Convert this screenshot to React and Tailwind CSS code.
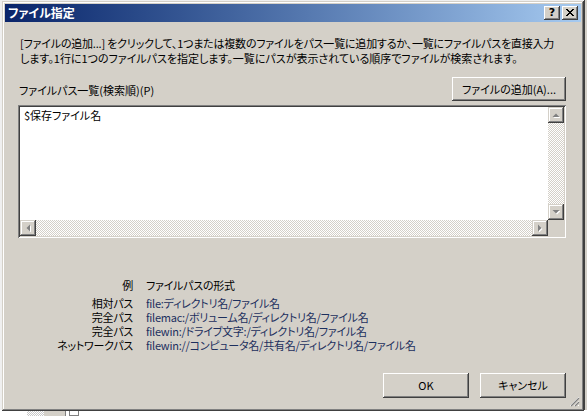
import React from "react";

const raised =
  "shadow-[inset_-1px_-1px_#404040,inset_1px_1px_#ffffff,inset_-2px_-2px_#808080,inset_2px_2px_#d4d0c8]";

function Arrow({ dir }) {
  const pts = {
    up: "0.5,6 4,2.5 7.5,6",
    down: "0.5,2 4,5.5 7.5,2",
    left: "6,0.5 2.5,4 6,7.5",
    right: "2,0.5 5.5,4 2,7.5",
  }[dir];
  return (
    <svg width="8" height="8" viewBox="0 0 8 8">
      <polygon points={pts} fill="#ffffff" transform="translate(1,1)" />
      <polygon points={pts} fill="#808080" />
    </svg>
  );
}

function ScrollBtn({ dir }) {
  return (
    <div className="w-[16px] h-[16px] shrink-0 bg-[#d4d0c8] flex items-center justify-center shadow-[inset_-1px_-1px_#404040,inset_1px_1px_#d4d0c8,inset_-2px_-2px_#808080,inset_2px_2px_#ffffff]">
      <Arrow dir={dir} />
    </div>
  );
}

const track =
  "bg-[repeating-conic-gradient(#ffffff_0_25%,#d4d0c8_0_50%)] bg-[length:2px_2px]";

export default function App() {
  return (
    <div className="relative w-[587px] h-[416px] overflow-hidden bg-[#efefef] font-['Noto_Sans_CJK_JP','Noto_Sans',sans-serif] [font-feature-settings:'palt'] text-black">
      {/* desktop fragments behind the dialog */}
      <div className="absolute right-0 top-0 w-[3px] h-full bg-[#d4d0c8] border-l border-[#404040]" />
      <div className="absolute left-0 bottom-0 w-full h-[6px] bg-white flex">
        <div className="ml-[27px] w-[17px] h-full bg-[repeating-conic-gradient(#ffffff_0_25%,#c8c8c8_0_50%)] bg-[length:2px_2px]" />
        <div className="w-[22px] h-full bg-[#d4d0c8] border-r border-[#808080]" />
        <div className="ml-[3px] w-[10px] h-full border border-[#808080] bg-white" />
      </div>

      {/* dialog window */}
      <div className="absolute left-[2px] top-[1px] w-[582px] h-[410px] bg-[#d4d0c8] p-[3px] flex flex-col shadow-[inset_-1px_-1px_#404040,inset_1px_1px_#d4d0c8,inset_-2px_-2px_#808080,inset_2px_2px_#ffffff]">
        {/* title bar */}
        <div className="h-[18px] shrink-0 flex items-center pl-[3px] pr-[3px] bg-gradient-to-r from-[#0a246a] to-[#a6caf0]">
          <span className="text-white font-bold text-[12px] leading-[18px]">
            ファイル指定
          </span>
          <div className="ml-auto flex items-center">
            <div className={`w-[16px] h-[14px] bg-[#d4d0c8] ${raised} flex items-center justify-center`}>
              <span className="font-['DejaVu_Sans',sans-serif] font-bold text-[11px] leading-[11px] [font-feature-settings:normal] -mt-[1px]">
                ?
              </span>
            </div>
            <div className={`ml-[2px] w-[16px] h-[14px] bg-[#d4d0c8] ${raised} flex items-center justify-center`}>
              <svg width="8" height="7" viewBox="0 0 8 7" className="-mt-[1px]">
                <path d="M0 0h2v1h1v1h2V1h1V0h2v1H7v1H6v1H5v1h1v1h1v1h1v1H6V6H5V5H3v1H2v1H0V6h1V5h1V4h1V3H2V2H1V1H0z" fill="#000" />
              </svg>
            </div>
          </div>
        </div>

        {/* content */}
        <div className="relative flex-1 flex flex-col pl-[13px] pr-[15px] pt-[14px] text-[11px] leading-[15px]">
          <p className="pl-[2px] whitespace-nowrap">
            <span className="tracking-[-0.2px]">
              [ファイルの追加...] をクリックして、1つまたは複数のファイルをパス一覧に追加するか、一覧にファイルパスを直接入力
            </span>
            <br />
            します。1行に1つのファイルパスを指定します。一覧にパスが表示されている順序でファイルが検索されます。
          </p>

          <div className="mt-[11px] flex items-end justify-between">
            <span className="pl-[1px] mb-[3px]">ファイルパス一覧(検索順)(P)</span>
            <button className={`w-[114px] h-[24px] bg-[#d4d0c8] ${raised} text-[11px] leading-[15px]`}>
              ファイルの追加(A)...
            </button>
          </div>

          {/* list box */}
          <div className="mt-[4px] h-[133px] bg-white p-[2px] grid grid-cols-[1fr_16px] grid-rows-[1fr_16px] shadow-[inset_1px_1px_#808080,inset_-1px_-1px_#ffffff,inset_2px_2px_#404040,inset_-2px_-2px_#d4d0c8]">
            <div className="pl-[4px] pt-[1px]">$保存ファイル名</div>
            <div className="flex flex-col">
              <ScrollBtn dir="up" />
              <div className={`flex-1 ${track}`} />
              <ScrollBtn dir="down" />
            </div>
            <div className="flex">
              <ScrollBtn dir="left" />
              <div className={`flex-1 ${track}`} />
              <ScrollBtn dir="right" />
            </div>
            <div className="bg-[#d4d0c8]" />
          </div>

          {/* examples */}
          <div className="mt-[40px] grid grid-cols-[115px_1fr] gap-x-[13px] leading-[14px] whitespace-nowrap tracking-[-0.25px]">
            <div className="text-right mb-[4px]">例</div>
            <div className="mb-[4px]">ファイルパスの形式</div>
            <div className="text-right">相対パス</div>
            <div className="text-[#1c2f5e]">file:ディレクトリ名/ファイル名</div>
            <div className="text-right">完全パス</div>
            <div className="text-[#1c2f5e]">filemac:/ボリューム名/ディレクトリ名/ファイル名</div>
            <div className="text-right">完全パス</div>
            <div className="text-[#1c2f5e]">filewin:/ドライブ文字:/ディレクトリ名/ファイル名</div>
            <div className="text-right">ネットワークパス</div>
            <div className="text-[#1c2f5e]">filewin://コンピュータ名/共有名/ディレクトリ名/ファイル名</div>
          </div>

          <div className="mt-[21px] flex justify-end gap-[11px]">
            <button className={`w-[86px] h-[25px] bg-[#d4d0c8] ${raised} text-[11px]`}>OK</button>
            <button className={`w-[86px] h-[25px] bg-[#d4d0c8] ${raised} text-[11px]`}>キャンセル</button>
          </div>

          {/* size grip */}
          <svg className="absolute right-[1px] bottom-[1px]" width="11" height="11" viewBox="0 0 11 11">
            <path d="M10 1L1 10M10 5L5 10M10 9L9 10" stroke="#ffffff" strokeWidth="1" />
            <path d="M10 2L2 10M10 6L6 10" stroke="#808080" strokeWidth="1.2" />
          </svg>
        </div>
      </div>
    </div>
  );
}
